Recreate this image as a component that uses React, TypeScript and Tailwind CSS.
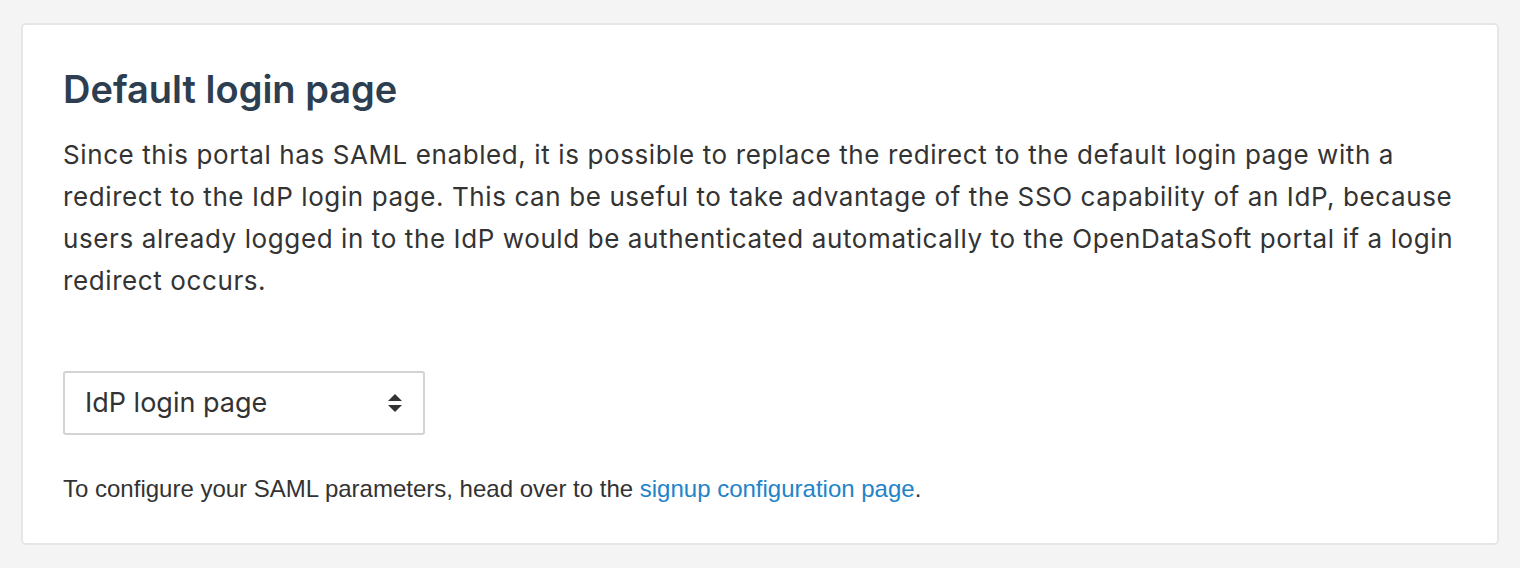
export default function App() {
  return (
    <div className="min-h-[568px] bg-[#f4f4f4] px-[21px] pt-[23px] pb-[22px] font-['Inter',sans-serif]">
      <div className="rounded-[5px] border-2 border-[#e6e6e6] bg-white px-[40px] pt-[40px] pb-[40px]">
        <h2 className="text-[38px] font-semibold leading-[48px] text-[#2c3e50]">Default login page</h2>
        <p className="mt-[21px] text-[26px] leading-[42px] tracking-[0.6px] text-[#333]">
          Since this portal has SAML enabled, it is possible to replace the redirect to the default login page with a
          <br />
          redirect to the IdP login page. This can be useful to take advantage of the SSO capability of an IdP, because
          <br />
          users already logged in to the IdP would be authenticated automatically to the OpenDataSoft portal if a login
          <br />
          redirect occurs.
        </p>
        <div className="mt-[69px] flex h-[64px] w-[362px] items-center justify-between rounded-[3px] border-2 border-[#d3d3d3] bg-white pl-[20px] pr-[20px]">
          <span className="text-[27px] text-[#333]">IdP login page</span>
          <svg width="16" height="22" viewBox="0 0 16 22" className="text-[#333]">
            <path d="M1 9 L8 2 L15 9 Z" fill="currentColor" />
            <path d="M1 13 L8 20 L15 13 Z" fill="currentColor" />
          </svg>
        </div>
        <p className="mt-[40px] font-['Liberation_Sans',sans-serif] text-[24px] leading-[28px] text-[#333]">
          To configure your SAML parameters, head over to the{' '}
          <a href="#" className="text-[#2283c7]">signup configuration page</a>.
        </p>
      </div>
    </div>
  );
}
